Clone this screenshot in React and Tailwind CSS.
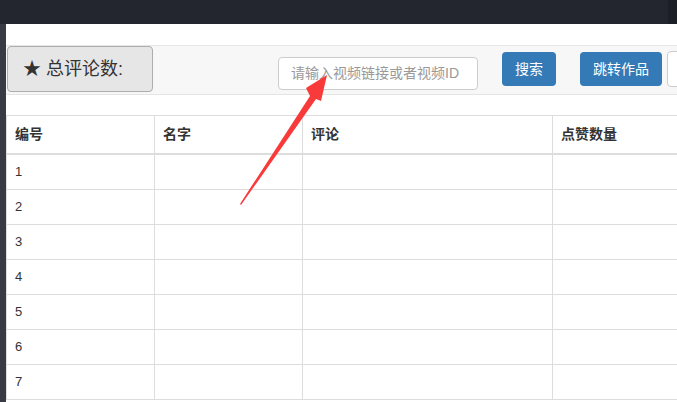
const rows = [1, 2, 3, 4, 5, 6, 7]

export default function App() {
  return (
    <div className="relative h-[402px] w-[677px] overflow-hidden bg-white" style={{ fontFamily: '"Liberation Sans", "Noto Sans CJK SC", sans-serif' }}>
      {/* top bar */}
      <div className="flex h-[24px] w-full bg-[#23262e]">
        <div className="flex-1" />
        <div className="w-[9px] bg-[#1c1f25]" />
      </div>

      <div className="flex">
        <div className="h-[378px] w-[6px] shrink-0 bg-[#383b44]" />

        <div className="flex-1 pt-[21px]">
          {/* toolbar */}
          <div className="flex h-[50px] items-start border-y border-[#e5e5e5] bg-[#f7f7f7] pl-[1px]">
            <div className="flex h-[46px] w-[146px] shrink-0 items-center rounded border border-[#adadad] bg-[#e6e6e6] pl-[15px] text-[18px] text-[#333]">
              ★ 总评论数:
            </div>
            <div className="ml-[125px] mt-[11px] flex h-[33px] w-[200px] shrink-0 items-center rounded border border-[#cccccc] bg-white pl-[12px] text-[14px] text-[#999]">
              请输入视频链接或者视频ID
            </div>
            <div className="ml-[24px] mt-[6px] flex h-[34px] w-[54px] shrink-0 items-center justify-center rounded bg-[#337ab7] text-[14px] text-white">
              搜索
            </div>
            <div className="ml-[24px] mt-[6px] flex h-[34px] w-[82px] shrink-0 items-center justify-center rounded bg-[#337ab7] text-[14px] text-white">
              跳转作品
            </div>
            <div className="ml-[5px] mt-[5px] h-[36px] w-[40px] shrink-0 rounded border border-[#cccccc] bg-white" />
          </div>

          {/* table */}
          <div className="mt-[20px] w-[720px] border-t border-l border-[#dddddd] text-[14px] text-[#333]">
            <div className="flex h-[39px] border-b-2 border-[#dddddd] font-bold">
              <div className="flex w-[148px] items-center border-r border-[#dddddd] pl-[8px]">编号</div>
              <div className="flex w-[148px] items-center border-r border-[#dddddd] pl-[8px]">名字</div>
              <div className="flex w-[250px] items-center border-r border-[#dddddd] pl-[8px]">评论</div>
              <div className="flex flex-1 items-center pl-[8px]">点赞数量</div>
            </div>
            {rows.map((n) => (
              <div key={n} className="flex h-[35px] border-b border-[#dddddd] text-[13px]">
                <div className="flex w-[148px] items-center border-r border-[#dddddd] pl-[8px]">{n}</div>
                <div className="w-[148px] border-r border-[#dddddd]" />
                <div className="w-[250px] border-r border-[#dddddd]" />
                <div className="flex-1" />
              </div>
            ))}
          </div>
        </div>
      </div>

      {/* red annotation arrow */}
      <svg className="pointer-events-none absolute left-0 top-0" width="677" height="402" viewBox="0 0 677 402">
        <polygon points="240,204 310,96 306,88 327,75 321,101 316,99 241,205" fill="#f83a3a" />
      </svg>
    </div>
  )
}
